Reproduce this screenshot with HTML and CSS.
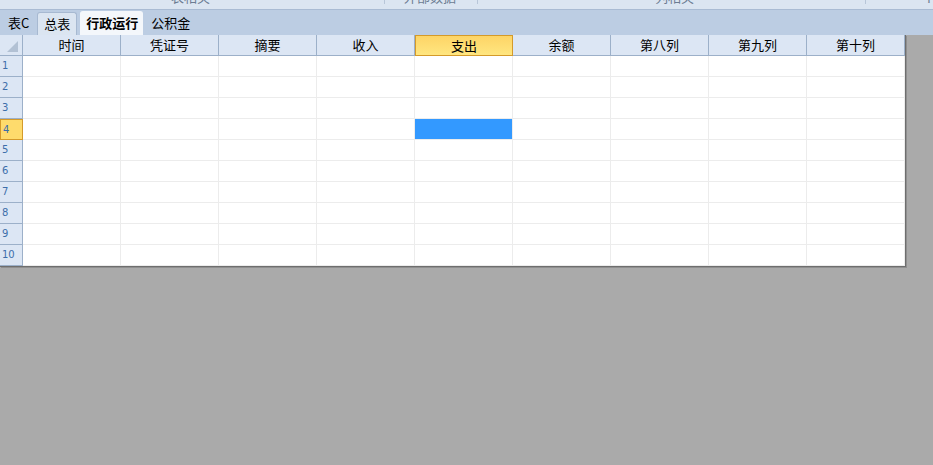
FILE: index.html
```html
<!DOCTYPE html>
<html lang="zh">
<head>
<meta charset="utf-8">
<link rel="stylesheet" href="styles.css">
</head>
<body>
<div class="ribbon">
  <span class="grp g1">表相关</span>
  <span class="sep s1"></span>
  <span class="grp g2">外部数据</span>
  <span class="sep s2"></span>
  <span class="grp g3">列相关</span>
  <span class="sep s3"></span>
  <span class="grp g4">ト</span>
</div>
<div class="tabbar">
  <span class="label first">表C</span>
  <span class="tab">总表</span>
  <span class="tab active">行政运行</span>
  <span class="label last">公积金</span>
</div>
<div class="sheet">
  <div class="corner"><span class="tri"></span></div>
  <div class="ch">时间</div><div class="ch">凭证号</div><div class="ch">摘要</div><div class="ch">收入</div><div class="ch sel">支出</div><div class="ch">余额</div><div class="ch">第八列</div><div class="ch">第九列</div><div class="ch">第十列</div>

  <div class="rh">1</div><div class="c"></div><div class="c"></div><div class="c"></div><div class="c"></div><div class="c"></div><div class="c"></div><div class="c"></div><div class="c"></div><div class="c"></div>
  <div class="rh">2</div><div class="c"></div><div class="c"></div><div class="c"></div><div class="c"></div><div class="c"></div><div class="c"></div><div class="c"></div><div class="c"></div><div class="c"></div>
  <div class="rh">3</div><div class="c"></div><div class="c"></div><div class="c"></div><div class="c"></div><div class="c"></div><div class="c"></div><div class="c"></div><div class="c"></div><div class="c"></div>
  <div class="rh sel">4</div><div class="c"></div><div class="c"></div><div class="c"></div><div class="c"></div><div class="c active"></div><div class="c"></div><div class="c"></div><div class="c"></div><div class="c"></div>
  <div class="rh">5</div><div class="c"></div><div class="c"></div><div class="c"></div><div class="c"></div><div class="c"></div><div class="c"></div><div class="c"></div><div class="c"></div><div class="c"></div>
  <div class="rh">6</div><div class="c"></div><div class="c"></div><div class="c"></div><div class="c"></div><div class="c"></div><div class="c"></div><div class="c"></div><div class="c"></div><div class="c"></div>
  <div class="rh">7</div><div class="c"></div><div class="c"></div><div class="c"></div><div class="c"></div><div class="c"></div><div class="c"></div><div class="c"></div><div class="c"></div><div class="c"></div>
  <div class="rh">8</div><div class="c"></div><div class="c"></div><div class="c"></div><div class="c"></div><div class="c"></div><div class="c"></div><div class="c"></div><div class="c"></div><div class="c"></div>
  <div class="rh">9</div><div class="c"></div><div class="c"></div><div class="c"></div><div class="c"></div><div class="c"></div><div class="c"></div><div class="c"></div><div class="c"></div><div class="c"></div>
  <div class="rh">10</div><div class="c"></div><div class="c"></div><div class="c"></div><div class="c"></div><div class="c"></div><div class="c"></div><div class="c"></div><div class="c"></div><div class="c"></div>
</div>
</body>
</html>
```
FILE: styles.css
```css
* { box-sizing: border-box; }
html, body { margin: 0; padding: 0; }
body {
  background: #aaaaaa;
  width: 933px;
  height: 465px;
  overflow: hidden;
  font-family: "Noto Sans CJK SC", "Liberation Sans", sans-serif;
  font-size: 13px;
  color: #000;
}
.ribbon {
  height: 10px;
  background: #dbe5f1;
  border-bottom: 1px solid #a9bbd3;
  position: relative;
  overflow: hidden;
}
.grp {
  position: absolute;
  top: -12px;
  font-size: 13px;
  line-height: 17px;
  color: #6c7c92;
}
.g1 { left: 171px; }
.g2 { left: 404px; }
.g3 { left: 655px; }
.g4 { left: 924px; }
.sep {
  position: absolute;
  top: 0;
  width: 1px;
  height: 4px;
  background: #b8c6d8;
}
.s1 { left: 384px; }
.s2 { left: 477px; }
.s3 { left: 865px; }

.tabbar {
  height: 25px;
  background: #bccde3;
  display: flex;
  align-items: flex-end;
}
.label {
  height: 23px;
  line-height: 22px;
}
.label.first { padding: 0 8px 0 8px; }
.label.last { padding-left: 8px; }
.tab {
  height: 23px;
  line-height: 21px;
  padding: 0 6px;
  background: #dbe5f1;
  border: 1px solid #a7b9d1;
  border-bottom: none;
  border-radius: 3px 3px 0 0;
}
.tab.active {
  height: 24px;
  background: #f4f7fb;
  font-weight: bold;
  border-color: #f4f7fb;
  margin-left: 3px;
  padding: 0 4px 0 5px;
}

.sheet {
  display: grid;
  grid-template-columns: 23px repeat(9, 98px);
  grid-auto-rows: 21px;
  width: 906px;
  background: #fff;
  border-right: 1px solid #6e6e6e;
  border-bottom: 1px solid #6e6e6e;
  box-shadow: 1px 1px 0 #8f8f8f;
}
.corner {
  background: #dce6f4;
  border-right: 1px solid #9cb0c9;
  border-bottom: 1px solid #9cb0c9;
  position: relative;
}
.tri {
  position: absolute;
  right: 4px;
  bottom: 3px;
  width: 0;
  height: 0;
  border-left: 11px solid transparent;
  border-bottom: 11px solid #b2c1d4;
}
.ch {
  background: #dce6f4;
  border-right: 1px solid #9cb0c9;
  border-bottom: 1px solid #9cb0c9;
  text-align: center;
  line-height: 19px;
  font-size: 13px;
}
.ch.sel {
  background: linear-gradient(#fdd466, #ffe680);
  border: 1px solid #d49a2a;
}
.rh {
  background: #dce6f4;
  border-right: 1px solid #9cb0c9;
  border-bottom: 1px solid #9cb0c9;
  color: #3c6eaa;
  font-family: "DejaVu Sans", sans-serif;
  font-size: 10px;
  line-height: 20px;
  padding-left: 2px;
}
.rh.sel {
  background: #fedb6c;
  border: 1px solid #d49a2a;
}
.c {
  border-right: 1px solid #ececec;
  border-bottom: 1px solid #ececec;
}
.c.active {
  background: #3399ff;
}
```
